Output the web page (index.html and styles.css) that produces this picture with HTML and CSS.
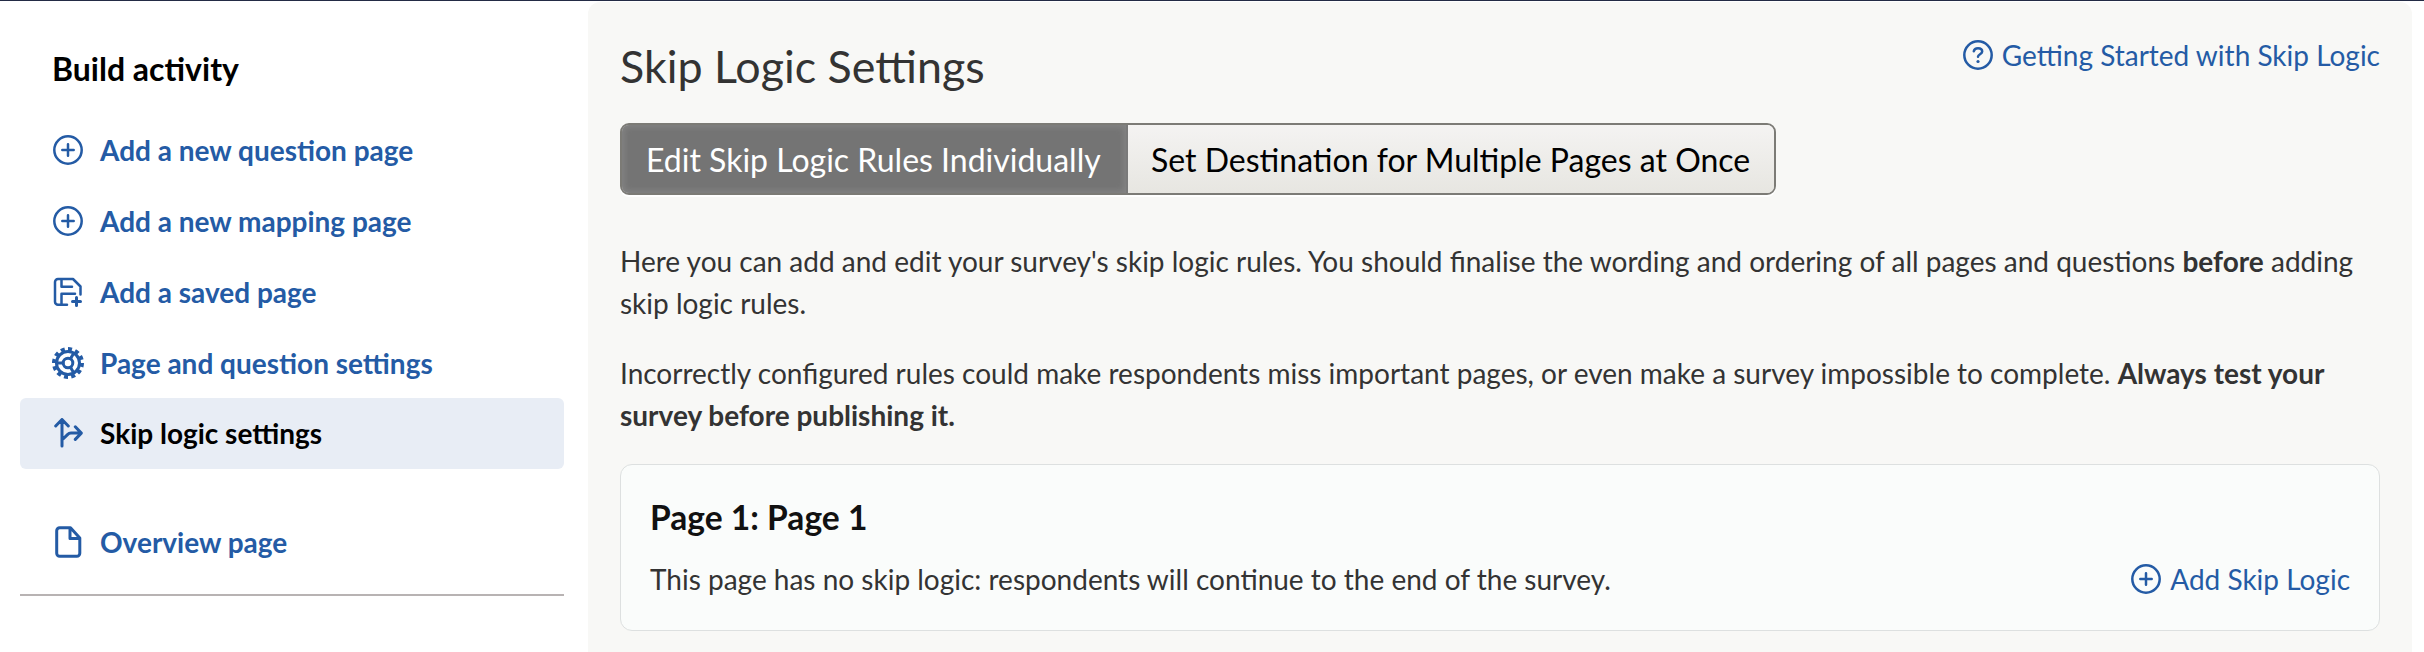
FILE: index.html
```html
<!DOCTYPE html>
<html lang="en">
<head>
<meta charset="utf-8">
<title>Skip Logic Settings</title>
<link rel="stylesheet" href="styles.css">
</head>
<body>
<svg class="sprite" aria-hidden="true">
  <symbol id="plus" viewBox="0 0 30 30"><circle cx="15" cy="15" r="13.7"/><path d="M15 9.300v11.400M9.300 15h11.400"/></symbol>
  <symbol id="help" viewBox="0 0 30 30"><circle cx="15" cy="15" r="13.7"/><path d="M10.800 11.300c.4-2 2-3.100 4.200-3.100 2.500 0 4.200 1.300 4.200 3.400 0 2.600-4.200 2.700-4.200 5.200"/><circle class="dot" cx="15" cy="21.500" r="1.600"/></symbol>
  <symbol id="save" viewBox="0 0 30 30"><path d="M14 27.700H5a3 3 0 0 1-3-3V5a3 3 0 0 1 3-3h15l7.500 7.500v8M8.500 2v7.800H19M8.500 27V16.800H22"/><path class="heavy" d="M23.500 20.500v8M19.500 24.500h8"/></symbol>
  <symbol id="gear" viewBox="0 0 32 32"><circle class="teeth" cx="16" cy="16" r="14" pathLength="120"/><circle class="heavy" cx="16" cy="16" r="11.500"/><circle class="heavy" cx="16" cy="16" r="4.800"/><path class="heavy" d="M11 16H5M18.500 11.700l3-5.200M18.500 20.300l3 5.200"/></symbol>
  <symbol id="split" viewBox="0 0 30 30"><path class="heavy" d="M9 28V1.800M2.700 8 9 1.500 15.300 8M9 22l5.500-5.400q1.500-1.500 3.500-1.500h10M22.300 8.800l6 6.300-6 6.300"/></symbol>
  <symbol id="page" viewBox="0 0 30 32"><path class="heavy" d="M6.700 1.800h10.800L26.800 12v15.200a3 3 0 0 1-3 3H6.700a3 3 0 0 1-3-3V4.800a3 3 0 0 1 3-3zM17 2v10.500h9.500"/></symbol>
</svg>
<div class="app">
  <aside class="sidebar">
    <h2 class="sidebar-title">Build activity</h2>
    <nav class="menu">
      <a class="item"><svg class="icon"><use href="#plus"/></svg>Add a new question page</a>
      <a class="item"><svg class="icon"><use href="#plus"/></svg>Add a new mapping page</a>
      <a class="item"><svg class="icon"><use href="#save"/></svg>Add a saved page</a>
      <a class="item"><svg class="icon gear"><use href="#gear"/></svg>Page and question settings</a>
      <a class="item active"><svg class="icon"><use href="#split"/></svg>Skip logic settings</a>
      <a class="item overview"><svg class="icon page"><use href="#page"/></svg>Overview page</a>
    </nav>
  </aside>
  <main class="panel">
    <header class="head">
      <h1 class="title">Skip Logic Settings</h1>
      <a class="link help"><svg class="icon"><use href="#help"/></svg><span class="help-text">Getting Started with Skip Logic</span></a>
    </header>
    <div class="tabs">
      <div class="tab selected"><span>Edit Skip Logic Rules Individually</span></div>
      <div class="tab"><span>Set Destination for Multiple Pages at Once</span></div>
    </div>
    <p class="text">Here you can add and edit your survey's skip logic rules. You should finalise the wording and ordering of all pages and questions <b>before</b> adding skip logic rules.</p>
    <p class="text">Incorrectly configured rules could make respondents miss important pages, or even make a survey impossible to complete. <b>Always test your survey before publishing it.</b></p>
    <section class="card">
      <h3 class="card-title">Page 1: Page 1</h3>
      <div class="row">
        <span>This page has no skip logic: respondents will continue to the end of the survey.</span>
        <a class="link"><svg class="icon"><use href="#plus"/></svg>Add Skip Logic</a>
      </div>
    </section>
  </main>
</div>
</body>
</html>
```
FILE: styles.css
```css
* { box-sizing: border-box; }
body { margin: 0; background: #fff; color: #333; font: 28px/42px Lato, Carlito, sans-serif; }
h1, h2, h3, p { margin: 0; }
.sprite { display: none; }
.app { display: flex; height: 652px; border-top: 1px solid #232b45; overflow: hidden; }
.icon { width: 30px; height: 30px; flex: none; fill: none; stroke: #245ba5; stroke-width: 2.500; stroke-linecap: round; stroke-linejoin: round; }
.heavy { stroke-width: 3; }
.dot { fill: #245ba5; stroke: none; }
.teeth { stroke-width: 4; stroke-dasharray: 5.500 4.500; stroke-linecap: butt; }
.gear { width: 32px; height: 32px; margin: 0 -1px; }
.page { height: 32px; }
.sidebar { width: 588px; padding: 46px 24px 0 20px; }
.sidebar-title { padding-left: 32px; color: #000; font-size: 32px; line-height: 44px; }
.menu { margin-top: 23px; padding-bottom: 17px; border-bottom: 2px solid #b8b3b3; }
.item { display: flex; align-items: center; gap: 17px; height: 71px; padding-left: 33px; border-radius: 6px; color: #245ba5; font-weight: 700; }
.active { padding-bottom: 2px; background: #e8edf5; color: #000; }
.overview { margin-top: 37px; }
.panel { width: 1824px; height: 660px; margin-top: 1px; padding: 36px 32px 0; border-radius: 12px; background: #f8f8f6; }
.head { display: flex; justify-content: space-between; align-items: flex-start; }
.title { font-size: 44.8px; font-weight: 400; line-height: 56px; }
.link { display: flex; align-items: center; gap: 9px; color: #245ba5; }
.help { margin-top: -4px; }
.tabs { display: flex; width: 1156px; height: 72px; margin-top: 29px; border: 2px solid #7c7b76; border-radius: 9px; overflow: hidden; box-shadow: 0 2px 0 #fff; color: #000; font-size: 32px; line-height: 69px; white-space: nowrap; }
.tab { flex: 1; padding-left: 23px; background: linear-gradient(#f4f3f2, #e7e6e1); }
.selected { flex: none; width: 506px; padding-left: 24px; border-right: 2px solid #7a7a7a; background: #747474; box-shadow: inset 0 0 6px 2px #858585; color: #fff; }
.text { margin-top: 28px; }
.tabs + .text { margin-top: 45px; }
.card { height: 167px; margin-top: 28px; padding: 30px 29px; border: 1px solid #dde0e0; border-radius: 12px; background: #fafcfb; }
.card-title { color: #111; font-size: 33.6px; line-height: 44px; }
.row { display: flex; justify-content: space-between; margin-top: 19px; }
```
